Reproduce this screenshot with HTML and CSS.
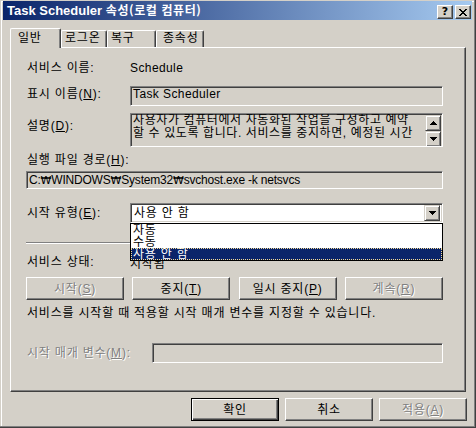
FILE: index.html
```html
<!DOCTYPE html>
<html lang="ko">
<head>
<meta charset="utf-8">
<title>Task Scheduler 속성</title>
<link rel="stylesheet" href="styles.css">
</head>
<body>
<div class="window">
  <div class="titlebar">
    <span class="title"><span class="t-en">Task Scheduler </span><span class="t-ko">속성(로컬 컴퓨터)</span></span>
    <div class="caption-btns">
      <span class="cap-btn help">?</span>
      <span class="cap-btn close"><svg width="8" height="7" viewBox="0 0 8 7"><path d="M0 0h2v1h-2zM6 0h2v1h-2zM1 1h2v1h-2zM5 1h2v1h-2zM2 2h4v1h-4zM3 3h2v1h-2zM2 4h4v1h-4zM1 5h2v1h-2zM5 5h2v1h-2zM0 6h2v1h-2zM6 6h2v1h-2z" fill="#000"/></svg></span>
    </div>
  </div>

  <div class="tabs">
    <div class="tab active">일반</div>
    <div class="tab t2">로그온</div>
    <div class="tab t3">복구</div>
    <div class="tab t4">종속성</div>
  </div>

  <div class="panel">
    <div class="row r1">
      <span class="label">서비스 이름:</span>
      <span class="value latin">Schedule</span>
    </div>
    <div class="row r2">
      <span class="label">표시 이름(<u>N</u>):</span>
      <div class="field grow"><span class="field-text latin">Task Scheduler</span></div>
    </div>
    <div class="row r3">
      <span class="label">설명(<u>D</u>):</span>
      <div class="field grow desc">
        <div class="desc-text">사용자가 컴퓨터에서 자동화된 작업을 구성하고 예약<br>할 수 있도록 합니다. 서비스를 중지하면, 예정된 시간</div>
        <div class="scroll">
          <span class="sbtn"><svg width="7" height="4" viewBox="0 0 7 4"><path d="M3 0h1v1h1v1h1v1h1v1h-7v-1h1v-1h1v-1h1z" fill="#000"/></svg></span>
          <span class="sbtn"><svg width="7" height="4" viewBox="0 0 7 4"><path d="M0 0h7v1h-1v1h-1v1h-1v1h-1v-1h-1v-1h-1v-1h-1z" fill="#000"/></svg></span>
        </div>
      </div>
    </div>
    <div class="row r4">
      <span class="label wide">실행 파일 경로(<u>H</u>):</span>
    </div>
    <div class="row r5">
      <div class="field grow path"><span class="field-text">C:<span class="won">₩</span>WINDOWS<span class="won">₩</span>System32<span class="won">₩</span>svchost.exe -k netsvcs</span></div>
    </div>
    <div class="row r6">
      <span class="label">시작 유형(<u>E</u>):</span>
      <div class="combo grow">
        <span class="combo-text">사용 안 함</span>
        <span class="sbtn drop"><svg width="7" height="4" viewBox="0 0 7 4"><path d="M0 0h7v1h-1v1h-1v1h-1v1h-1v-1h-1v-1h-1v-1h-1z" fill="#000"/></svg></span>
        <ul class="droplist">
          <li>자동</li>
          <li>수동</li>
          <li class="sel">사용 안 함</li>
        </ul>
      </div>
    </div>
    <div class="sep"></div>
    <div class="row r7">
      <span class="label">서비스 상태:</span>
      <span class="value">시작됨</span>
    </div>
    <div class="row r8 btnrow">
      <span class="btn disabled">시작(<u>S</u>)</span>
      <span class="btn">중지(<u>T</u>)</span>
      <span class="btn">일시 중지(<u>P</u>)</span>
      <span class="btn disabled">계속(<u>R</u>)</span>
    </div>
    <div class="row r9">
      <span class="info">서비스를 시작할 때 적용할 시작 매개 변수를 지정할 수 있습니다.</span>
    </div>
    <div class="row r10">
      <span class="label disabled-text param">시작 매개 변수(<u>M</u>):</span>
      <div class="field grow"></div>
    </div>
  </div>

  <div class="dlg-buttons">
    <span class="btn dlg default">확인</span>
    <span class="btn dlg">취소</span>
    <span class="btn dlg disabled">적용(<u>A</u>)</span>
  </div>
</div>
</body>
</html>
```

FILE: styles.css
```css
* { box-sizing: border-box; }
html, body { margin: 0; padding: 0; }
body {
  width: 476px;
  height: 428px;
  overflow: hidden;
  background: #D4D0C8;
  font-family: "Liberation Sans", "Noto Sans CJK KR", sans-serif;
  font-size: 12px;
  letter-spacing: 0.8px;
  color: #000;
}
u { text-decoration: underline; text-underline-offset: 1px; }
.latin { letter-spacing: 0.4px; }

.window {
  width: 476px;
  height: 428px;
  padding: 1px 4px 0 3px;
  background: #D4D0C8;
  box-shadow: inset -1px -1px #404040, inset -2px -2px #808080, inset 1px 1px #D4D0C8, inset 2px 2px #fff;
}

/* title bar */
.titlebar {
  height: 19px;
  background: linear-gradient(to right, #0A246A, #A6CAF0);
  display: flex;
  align-items: center;
  justify-content: space-between;
  padding: 0 1px 0 4px;
}
.title {
  color: #fff;
  font-weight: bold;
  white-space: nowrap;
  line-height: 19px;
  letter-spacing: 0;
}
.t-en { font-family: "Liberation Sans", sans-serif; font-size: 13px; }
.t-ko { font-family: "Noto Sans CJK KR", sans-serif; font-size: 12px; letter-spacing: 0.6px; }
.caption-btns {
  align-self: flex-end;
  margin-bottom: 1px;
  display: flex;
  gap: 2px;
  letter-spacing: 0;
}
.cap-btn {
  width: 16px;
  height: 14px;
  background: #D4D0C8;
  border: 1px solid;
  border-color: #fff #404040 #404040 #fff;
  box-shadow: inset -1px -1px #808080;
  display: flex;
  align-items: center;
  justify-content: center;
}
.cap-btn.help {
  font-family: "DejaVu Sans", sans-serif;
  font-weight: bold;
  font-size: 11px;
  line-height: 12px;
}

/* tabs */
.tabs {
  margin: 8px 0 0 7px;
  height: 19px;
  display: flex;
  align-items: flex-end;
  position: relative;
  z-index: 2;
}
.tab {
  height: 17px;
  line-height: 15px;
  padding-left: 4px;
  background: #D4D0C8;
  border-top: 1px solid #fff;
  border-left: 1px solid #fff;
  border-right: 1px solid #404040;
  box-shadow: inset -1px 0 #808080;
  border-radius: 2px 2px 0 0;
  white-space: nowrap;
}
.tab.active {
  width: 51px;
  height: 20px;
  margin-bottom: -1px;
  line-height: 19px;
  padding-left: 7px;
}
.tab.t2 { width: 46px; padding-left: 3px; }
.tab.t3 { width: 49px; padding-left: 3px; }
.tab.t4 { width: 48px; padding-left: 6px; }

/* panel */
.panel {
  margin-left: 7px;
  width: 456px;
  height: 345px;
  border: 1px solid;
  border-color: #fff #404040 #404040 #fff;
  box-shadow: inset -1px -1px #808080;
  padding: 0 22px 0 16px;
  display: flex;
  flex-direction: column;
}
.row { display: flex; align-items: center; flex: none; }
.grow { flex: 1; min-width: 0; }
.label { width: 103px; flex: none; white-space: nowrap; line-height: 14px; }
.label.wide { width: auto; }
.label.param { width: 125px; }
.value { white-space: nowrap; }

.r1 { margin-top: 12px; height: 16px; }
.r2 { margin-top: 10px; height: 20px; align-items: stretch; }
.r2 .label { padding-top: 1px; }
.r3 { margin-top: 7px; height: 34px; align-items: stretch; }
.r3 .label { padding-top: 6px; }
.r4 { margin-top: 6px; height: 14px; }
.r5 { margin-top: 4px; height: 18px; margin-left: -1px; align-items: stretch; }
.r6 { margin-top: 14px; height: 20px; align-items: center; }
.sep {
  margin-top: 19px;
  margin-left: -1px;
  height: 2px;
  flex: none;
  border-top: 1px solid #808080;
  border-bottom: 1px solid #fff;
}
.r7 { margin-top: 11px; height: 14px; }
.r8 { margin-top: 8px; height: 23px; margin-left: -1px; }
.r9 { margin-top: 6px; height: 14px; }
.r10 { margin-top: 23px; height: 20px; align-items: stretch; }
.r10 .label { padding-top: 3px; }

/* sunken field */
.field {
  background: #D4D0C8;
  border: 1px solid;
  border-color: #808080 #fff #fff #808080;
  box-shadow: inset 1px 1px #404040, inset -1px -1px #D4D0C8;
  padding: 1px 2px 0 2px;
  overflow: hidden;
  white-space: nowrap;
}
.field-text { display: block; line-height: 13px; }
.path .field-text { line-height: 14px; letter-spacing: -0.2px; }
.won { font-family: "DejaVu Sans", sans-serif; font-size: 11px; }

.desc {
  display: flex;
  padding: 0 0 0 2px;
}
.desc-text {
  flex: 1;
  white-space: nowrap;
  line-height: 13px;
  overflow: hidden;
  letter-spacing: 0.6px;
}
.scroll {
  width: 16px;
  flex: none;
  display: flex;
  flex-direction: column;
  margin: 1px 1px 1px 0;
}
.sbtn {
  width: 16px;
  height: 16px;
  background: #D4D0C8;
  border: 1px solid;
  border-color: #D4D0C8 #404040 #404040 #D4D0C8;
  box-shadow: inset 1px 1px #fff, inset -1px -1px #808080;
  display: flex;
  align-items: center;
  justify-content: center;
  flex: none;
}

/* combo */
.combo {
  position: relative;
  height: 20px;
  background: #fff;
  border: 1px solid;
  border-color: #808080 #fff #fff #808080;
  box-shadow: inset 1px 1px #404040, inset -1px -1px #D4D0C8;
  display: flex;
  align-items: center;
  padding: 2px 2px 2px 3px;
}
.combo-text { flex: 1; line-height: 16px; }
.droplist {
  position: absolute;
  left: -1px;
  right: -1px;
  top: 19px;
  margin: 0;
  padding: 0;
  list-style: none;
  background: #fff;
  border: 1px solid #000;
  z-index: 5;
}
.droplist li {
  height: 12px;
  line-height: 12px;
  padding-left: 2px;
  white-space: nowrap;
}
.droplist li.sel {
  background: #0A246A;
  color: #fff;
  outline: 1px dotted #F5DB95;
  outline-offset: -1px;
}

/* buttons */
.btnrow { justify-content: space-between; }
.btn {
  width: 98px;
  height: 23px;
  background: #D4D0C8;
  border: 1px solid;
  border-color: #fff #404040 #404040 #fff;
  box-shadow: inset -1px -1px #808080;
  display: flex;
  align-items: center;
  justify-content: center;
  white-space: nowrap;
  line-height: 14px;
}
.btn.disabled, .disabled-text {
  color: #808080;
  text-shadow: 1px 1px #fff;
}
.dlg-buttons {
  margin: 6px 5px 0 0;
  display: flex;
  justify-content: flex-end;
  gap: 6px;
}
.btn.dlg { width: 88px; }
.btn.default {
  border: 1px solid #000;
  box-shadow: inset 1px 1px #fff, inset -1px -1px #404040, inset -2px -2px #808080;
}
.info { white-space: nowrap; line-height: 14px; }
```
